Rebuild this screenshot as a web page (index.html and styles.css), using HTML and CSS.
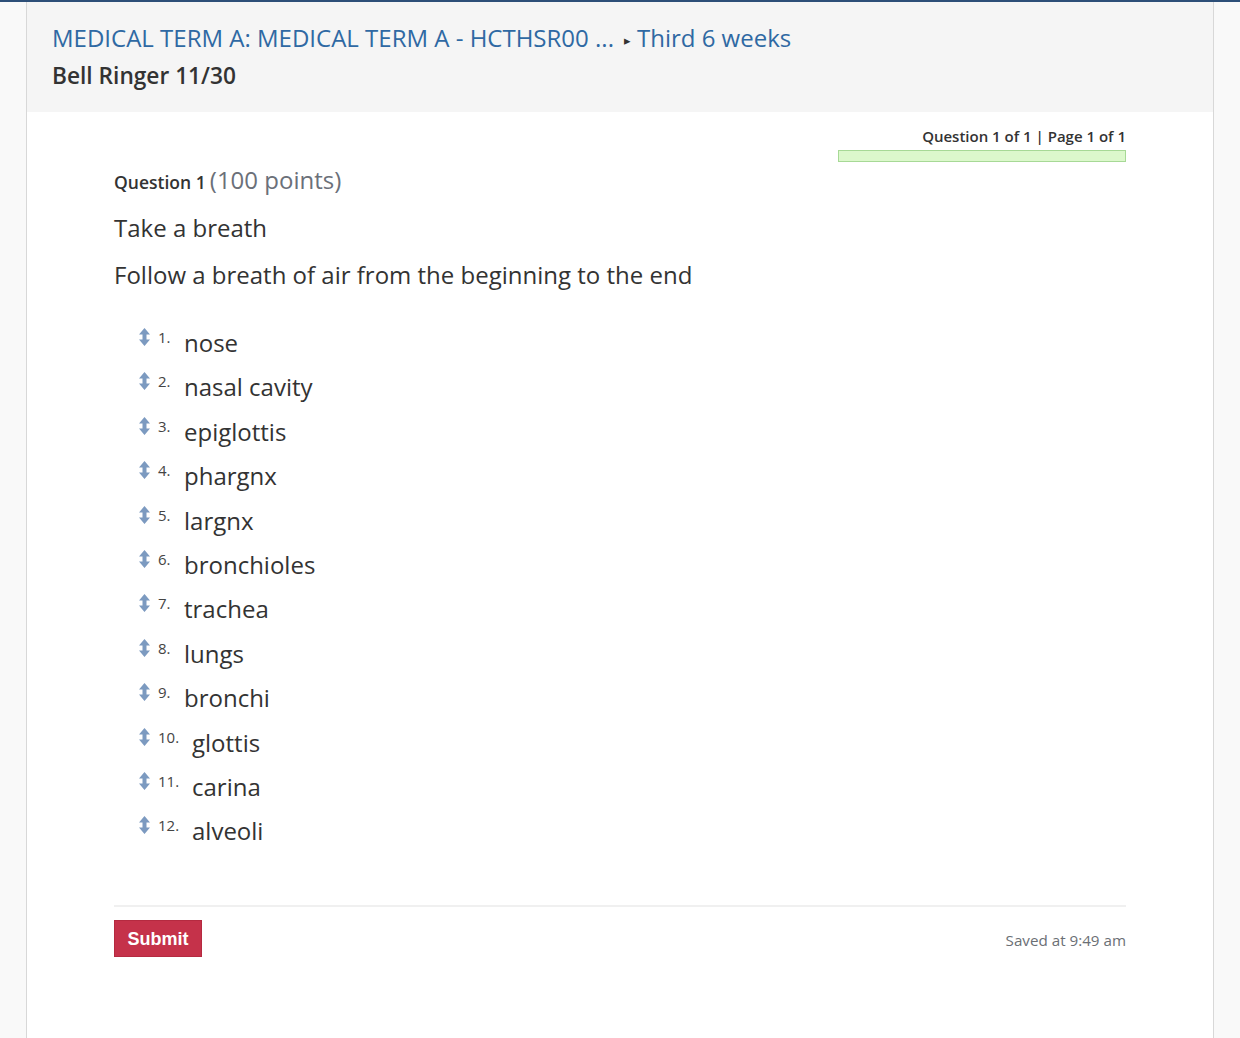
FILE: index.html
```html
<!DOCTYPE html>
<html>
<head>
<meta charset="utf-8">
<link rel="stylesheet" href="styles.css">
</head>
<body>
<div class="topline"></div>
<div class="page">
  <div class="header">
    <div class="crumbs"><a class="crumb">MEDICAL TERM A: MEDICAL TERM A - HCTHSR00 ...</a><span class="sep">&#9656;</span><a class="crumb">Third 6 weeks</a></div>
    <h1 class="title">Bell Ringer 11/30</h1>
  </div>
  <div class="content">
    <div class="progress">
      <div class="progress-text">Question 1 of 1 | Page 1 of 1</div>
      <div class="progress-bar"></div>
    </div>
    <div class="qhead"><span class="qlabel">Question 1</span> <span class="qpoints">(100 points)</span></div>
    <p class="qtext">Take a breath</p>
    <p class="qtext">Follow a breath of air from the beginning to the end</p>
    <ul class="order">
      <li><svg class="grip" viewBox="0 0 12 20"><path d="M6 1 L11.5 7.5 H8 V12.5 H11.5 L6 19 L0.5 12.5 H4 V7.5 H0.5 Z"/></svg><span class="num">1.</span><span class="item">nose</span></li>
      <li><svg class="grip" viewBox="0 0 12 20"><path d="M6 1 L11.5 7.5 H8 V12.5 H11.5 L6 19 L0.5 12.5 H4 V7.5 H0.5 Z"/></svg><span class="num">2.</span><span class="item">nasal cavity</span></li>
      <li><svg class="grip" viewBox="0 0 12 20"><path d="M6 1 L11.5 7.5 H8 V12.5 H11.5 L6 19 L0.5 12.5 H4 V7.5 H0.5 Z"/></svg><span class="num">3.</span><span class="item">epiglottis</span></li>
      <li><svg class="grip" viewBox="0 0 12 20"><path d="M6 1 L11.5 7.5 H8 V12.5 H11.5 L6 19 L0.5 12.5 H4 V7.5 H0.5 Z"/></svg><span class="num">4.</span><span class="item">phargnx</span></li>
      <li><svg class="grip" viewBox="0 0 12 20"><path d="M6 1 L11.5 7.5 H8 V12.5 H11.5 L6 19 L0.5 12.5 H4 V7.5 H0.5 Z"/></svg><span class="num">5.</span><span class="item">largnx</span></li>
      <li><svg class="grip" viewBox="0 0 12 20"><path d="M6 1 L11.5 7.5 H8 V12.5 H11.5 L6 19 L0.5 12.5 H4 V7.5 H0.5 Z"/></svg><span class="num">6.</span><span class="item">bronchioles</span></li>
      <li><svg class="grip" viewBox="0 0 12 20"><path d="M6 1 L11.5 7.5 H8 V12.5 H11.5 L6 19 L0.5 12.5 H4 V7.5 H0.5 Z"/></svg><span class="num">7.</span><span class="item">trachea</span></li>
      <li><svg class="grip" viewBox="0 0 12 20"><path d="M6 1 L11.5 7.5 H8 V12.5 H11.5 L6 19 L0.5 12.5 H4 V7.5 H0.5 Z"/></svg><span class="num">8.</span><span class="item">lungs</span></li>
      <li><svg class="grip" viewBox="0 0 12 20"><path d="M6 1 L11.5 7.5 H8 V12.5 H11.5 L6 19 L0.5 12.5 H4 V7.5 H0.5 Z"/></svg><span class="num">9.</span><span class="item">bronchi</span></li>
      <li><svg class="grip" viewBox="0 0 12 20"><path d="M6 1 L11.5 7.5 H8 V12.5 H11.5 L6 19 L0.5 12.5 H4 V7.5 H0.5 Z"/></svg><span class="num">10.</span><span class="item">glottis</span></li>
      <li><svg class="grip" viewBox="0 0 12 20"><path d="M6 1 L11.5 7.5 H8 V12.5 H11.5 L6 19 L0.5 12.5 H4 V7.5 H0.5 Z"/></svg><span class="num">11.</span><span class="item">carina</span></li>
      <li><svg class="grip" viewBox="0 0 12 20"><path d="M6 1 L11.5 7.5 H8 V12.5 H11.5 L6 19 L0.5 12.5 H4 V7.5 H0.5 Z"/></svg><span class="num">12.</span><span class="item">alveoli</span></li>
    </ul>
    <div class="footer">
      <button class="submit">Submit</button>
      <span class="saved">Saved at 9:49 am</span>
    </div>
  </div>
</div>
</body>
</html>
```

FILE: styles.css
```css
html, body {
  margin: 0;
  padding: 0;
}
body {
  background: #f9f9f9;
  font-family: "Open Sans", "Noto Sans", sans-serif;
  color: #333;
  height: 1038px;
  overflow: hidden;
}
.topline {
  height: 2px;
  background: #2d4f78;
}
.page {
  margin: 0 26px;
  border-left: 1px solid #d8d8d8;
  border-right: 1px solid #d8d8d8;
  background: #fff;
  min-height: 1036px;
}
.header {
  background: #f5f5f5;
  padding: 17px 25px 0;
  height: 93px;
}
.crumbs {
  font-size: 24px;
  line-height: 34px;
  color: #2f69a3;
  display: flex;
  align-items: center;
}
.crumb {
  color: #2f69a3;
}
.sep {
  font-size: 13px;
  color: #333;
  margin: 4px 6px 0 10px;
}
.title {
  margin: 4px 0 0;
  font-size: 22.7px;
  line-height: 30px;
  font-weight: 600;
  color: #333;
}
.content {
  padding: 13px 87px 0;
}
.progress {
  display: flex;
  flex-direction: column;
  align-items: flex-end;
}
.progress-text {
  font-size: 15px;
  font-weight: 600;
  line-height: 22px;
  color: #333;
}
.progress-bar {
  margin-top: 3px;
  width: 286px;
  height: 10px;
  background: #dcf8cc;
  border: 1px solid #a7d996;
}
.qhead {
  margin-top: 1px;
  margin-bottom: -2px;
  line-height: 34px;
}
.qlabel {
  font-size: 17.5px;
  font-weight: 600;
  color: #333;
}
.qpoints {
  font-size: 24px;
  color: #6b7079;
}
.qtext {
  margin: 12px 0 0;
  font-size: 24px;
  line-height: 35px;
  color: #333;
}
.order {
  list-style: none;
  margin: 35px 0 0;
  padding: 0 0 0 24px;
}
.order li {
  display: flex;
  align-items: flex-start;
  height: 44.4px;
}
.grip {
  width: 13px;
  height: 20px;
  fill: #7c9ac0;
  margin-left: -0.5px;
  flex: none;
}
.num {
  font-size: 15px;
  line-height: 20px;
  color: #444;
  margin-left: 7.5px;
  min-width: 26px;
}
.item {
  font-size: 24px;
  line-height: 34px;
  margin-top: -1px;
  color: #333;
}
.order li:nth-child(n+10) .num {
  min-width: 34px;
}
.footer {
  margin-top: 45px;
  border-top: 2px solid #f0f0f0;
  padding-top: 13px;
  display: flex;
  justify-content: space-between;
  align-items: center;
}
.submit {
  background: #c5324a;
  color: #fff;
  border: 1px solid #b52a40;
  font-family: "Liberation Sans", Arial, sans-serif;
  font-weight: bold;
  font-size: 18px;
  width: 88px;
  height: 37px;
  padding: 2px 0 0;
}
.saved {
  font-size: 15.2px;
  color: #6b6f75;
  margin-top: 4px;
}
```
